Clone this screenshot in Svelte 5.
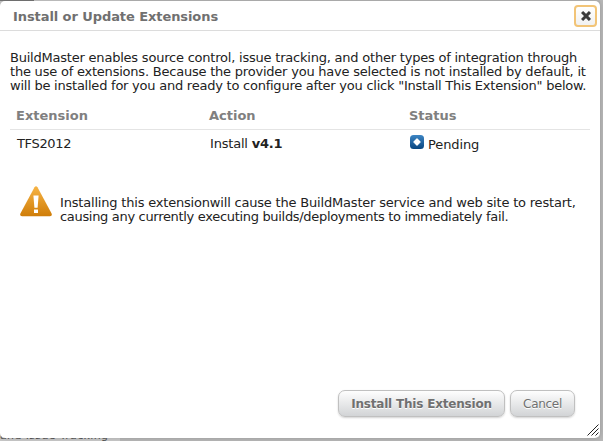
<script>
  const intro = [
    { text: 'BuildMaster enables source control, issue tracking, and other types of integration through', track: -0.215 },
    { text: 'the use of extensions. Because the provider you have selected is not installed by default, it', track: -0.215 },
    { text: 'will be installed for you and ready to configure after you click "Install This Extension" below.', track: -0.235 }
  ];
  const warning = [
    { text: 'Installing this extensionwill cause the BuildMaster service and web site to restart,', track: -0.19 },
    { text: 'causing any currently executing builds/deployments to immediately fail.', track: -0.315 }
  ];
</script>

<div class="page">
  <div class="behind top"><span></span></div>
  <div class="behind bottom"><span>and Issue Tracking</span></div>
  <section class="dialog">
    <header>
      <h1>Install or Update Extensions</h1>
      <button class="close" aria-label="Close">
        <svg width="10" height="10" viewBox="0 0 10 10"><path d="M2.1 2.1 7.9 7.9M7.9 2.1 2.1 7.9" stroke="#3b3b3b" stroke-width="3" stroke-linecap="square" /></svg>
      </button>
    </header>
    <div class="intro">
      {#each intro as line}<div class="line" style:letter-spacing="{line.track}px">{line.text}</div>{/each}
    </div>
    <div class="table">
      <div class="row head"><b>Extension</b><b>Action</b><b>Status</b></div>
      <div class="row">
        <span class="name">TFS2012</span>
        <span class="action">Install <strong>v4.1</strong></span>
        <span class="status">
          <svg width="14" height="14" viewBox="0 0 14 14">
            <defs><linearGradient id="blue" x2="0" y2="1"><stop stop-color="#3d85c4" /><stop offset="1" stop-color="#07457f" /></linearGradient></defs>
            <rect width="14" height="14" rx="3.5" fill="url(#blue)" />
            <path d="M7 4 10 7 7 10 4 7Z" fill="#fff" stroke="#fff" stroke-width="1.4" stroke-linejoin="round" />
          </svg>
          <i>Pending</i>
        </span>
      </div>
    </div>
    <div class="warning">
      <svg width="32" height="31" viewBox="0 0 32 31">
        <defs><linearGradient id="amber" x2="0" y2="1"><stop stop-color="#f7b445" /><stop offset="1" stop-color="#cf7d09" /></linearGradient></defs>
        <path d="M14.5 1.2Q16-.8 17.5 1.2L31.6 27.6Q32.5 30.2 30 30.3H2Q-.5 30.2.4 27.6Z" fill="url(#amber)" />
        <path d="M13.4 9.5H18.6L17.6 21.8H14.4ZM14 23.6H18V27H14Z" fill="#fff" />
      </svg>
      <div>
        {#each warning as line}<div class="line" style:letter-spacing="{line.track}px">{line.text}</div>{/each}
      </div>
    </div>
    <footer>
      <button class="primary">Install This Extension</button>
      <button class="cancel">Cancel</button>
    </footer>
    <svg class="grip" width="12" height="12" viewBox="0 0 12 12"><path d="M.5 11.5 11.5.5M4.5 11.5 11.5 4.5M8.5 11.5 11.5 8.5" stroke="#222" stroke-width="1" /></svg>
  </section>
</div>

<style>
  .page {
    position: relative;
    box-sizing: border-box;
    width: 603px;
    height: 441px;
    padding: 1px 3px 3px 0;
    overflow: hidden;
    background: #b7b7b7;
    font: 13px/14px Verdana, "DejaVu Sans", sans-serif;
    color: #222;
  }
  .behind {
    position: absolute;
    left: 0;
    width: 120px;
    background: #c8c8c8;
    overflow: hidden;
  }
  .top { top: 0; height: 6px; }
  .top span { display: block; width: 34px; height: 1px; background: #777; }
  .bottom { bottom: 0; height: 11px; font-size: 11px; line-height: 11px; letter-spacing: .36px; color: #555; white-space: nowrap; }
  .dialog {
    position: relative;
    box-sizing: border-box;
    height: 437px;
    background: #fff;
    border-radius: 5px;
    box-shadow: 0 0 5px rgba(0, 0, 0, .18);
  }
  header {
    box-sizing: border-box;
    display: flex;
    align-items: center;
    justify-content: space-between;
    height: 30px;
    padding: 0 3px 0 13px;
    border-bottom: 1px solid #dcdcdc;
  }
  h1 { margin: 2px 0 0; font-size: 13px; line-height: 16px; letter-spacing: -.08px; color: #707070; white-space: nowrap; }
  button { box-sizing: border-box; font-family: inherit; padding: 0; }
  .close {
    display: flex;
    align-items: center;
    justify-content: center;
    width: 23px;
    height: 22px;
    margin-top: 1px;
    border: 2px solid #f2c477;
    border-radius: 4px;
    background: linear-gradient(#fff, #f1f1f1);
  }
  .line { white-space: nowrap; }
  .intro { padding: 20px 0 0 10px; }
  .table { margin: 9px 10px 0; }
  .row {
    display: grid;
    grid-template-columns: 193px 200px 1fr;
    height: 28px;
    padding-left: 7px;
    line-height: 28px;
  }
  .head { box-sizing: border-box; height: 28px; padding: 0 0 0 6px; line-height: 27px; color: #808080; border-bottom: 1px solid #e4e4e4; }
  .name { letter-spacing: -.35px; }
  .action { letter-spacing: -.2px; }
  .status { display: flex; gap: 4px; }
  .status svg { margin-top: 5px; }
  .status i { font-style: normal; line-height: 30px; letter-spacing: -.1px; }
  .warning { display: flex; gap: 8px; padding: 28px 0 0 20px; }
  .warning > div { padding-top: 10px; }
  .warning svg { flex: none; }
  footer {
    position: absolute;
    right: 25px;
    bottom: 21px;
    display: flex;
    gap: 5px;
  }
  footer button {
    height: 27px;
    border: 1px solid #c0c0c0;
    border-radius: 7px;
    background: linear-gradient(#fefefe, #d2d4d6);
    box-shadow: 0 1px 2px rgba(0, 0, 0, .18);
    color: #707070;
    white-space: nowrap;
    text-shadow: 0 1px 0 #fff;
  }
  .primary { width: 167px; font-weight: bold; font-size: 12px; letter-spacing: -.2px; }
  .cancel { width: 65px; font-size: 12px; letter-spacing: -.3px; }
  .grip { position: absolute; right: 1px; bottom: 2px; }
</style>
